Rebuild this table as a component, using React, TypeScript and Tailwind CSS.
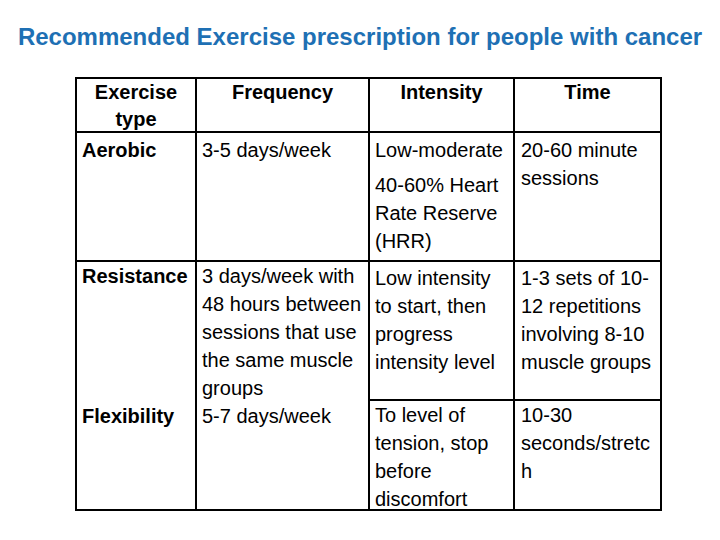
import React from "react";

const Lines = ({ lines }: { lines: string[] }) => (
  <>
    {lines.map((l, i) => (
      <div key={i} className="whitespace-nowrap">
        {l}
      </div>
    ))}
  </>
);

export default function App() {
  const cell = "border-r-2 border-b-2 border-black";
  return (
    <div
      className="w-[720px] h-[540px] bg-white text-black overflow-hidden"
      style={{ fontFamily: '"Liberation Sans", Arial, sans-serif' }}
    >
      <h1 className="pt-[21px] text-center text-[24px] leading-[32px] font-bold text-[#1e70b4] whitespace-nowrap">
        Recommended Exercise prescription for people with cancer
      </h1>
      <div className="mt-[24px] ml-[75px] w-[587px] border-l-2 border-t-2 border-black grid grid-cols-[120px_173px_145px_147px] grid-rows-[54px_129px_139px_110px] text-[20px] leading-[28px]">
        {/* Header */}
        <div className={`${cell} text-center font-bold leading-[27px]`}>
          <div>Exercise</div>
          <div>type</div>
        </div>
        <div className={`${cell} text-center font-bold leading-[27px]`}>Frequency</div>
        <div className={`${cell} text-center font-bold leading-[27px]`}>Intensity</div>
        <div className={`${cell} text-center font-bold leading-[27px]`}>Time</div>

        {/* Aerobic */}
        <div className={`${cell} pt-[3px] pl-[5px] font-bold`}>Aerobic</div>
        <div className={`${cell} pt-[3px] pl-[5px]`}>3-5 days/week</div>
        <div className={`${cell} pt-[3px] pl-[5px]`}>
          <div className="whitespace-nowrap">Low-moderate</div>
          <div className="mt-[7px]">
            <Lines lines={["40-60% Heart", "Rate Reserve", "(HRR)"]} />
          </div>
        </div>
        <div className={`${cell} pt-[3px] pl-[6px]`}>
          <Lines lines={["20-60 minute", "sessions"]} />
        </div>

        {/* Resistance + Flexibility (cols 1-2 merged) */}
        <div className={`${cell} row-span-2 pl-[5px] font-bold`}>
          <div>Resistance</div>
          <div className="mt-[112px]">Flexibility</div>
        </div>
        <div className={`${cell} row-span-2 pl-[5px]`}>
          <Lines
            lines={[
              "3 days/week with",
              "48 hours between",
              "sessions that use",
              "the same muscle",
              "groups",
              "5-7 days/week",
            ]}
          />
        </div>
        <div className={`${cell} pt-[2px] pl-[5px]`}>
          <Lines
            lines={[
              "Low intensity",
              "to start, then",
              "progress",
              "intensity level",
            ]}
          />
        </div>
        <div className={`${cell} pt-[2px] pl-[6px]`}>
          <Lines
            lines={[
              "1-3 sets of 10-",
              "12 repetitions",
              "involving 8-10",
              "muscle groups",
            ]}
          />
        </div>

        {/* Flexibility cols 3-4 */}
        <div className={`${cell} pl-[5px]`}>
          <Lines
            lines={["To level of", "tension, stop", "before", "discomfort"]}
          />
        </div>
        <div className={`${cell} pl-[6px]`}>
          <Lines lines={["10-30", "seconds/stretc", "h"]} />
        </div>
      </div>
    </div>
  );
}
